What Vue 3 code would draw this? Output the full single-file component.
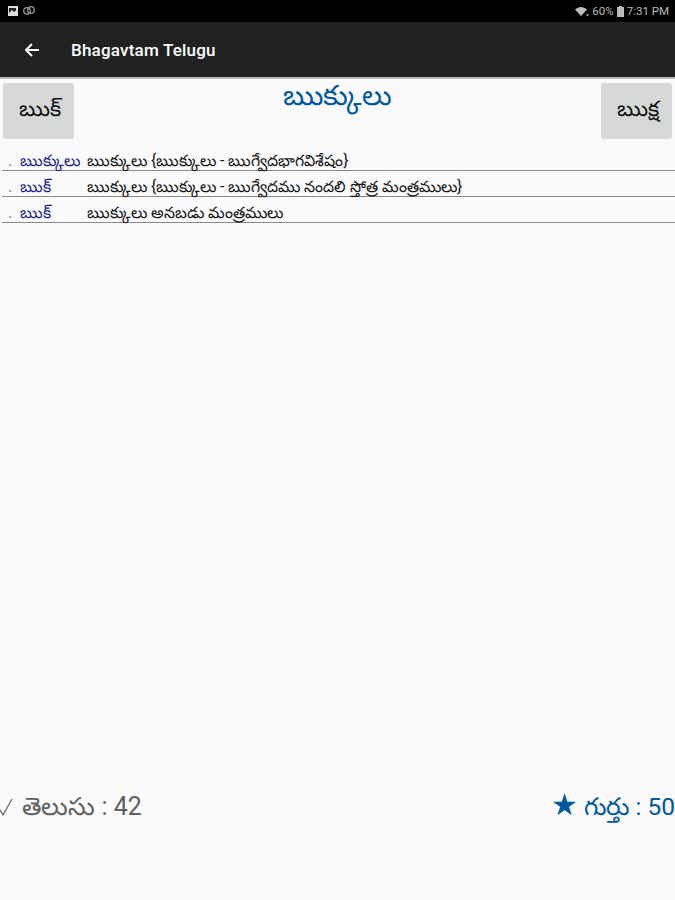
<template>
  <div class="page">
    <div class="statusbar">
      <div class="status-left">
        <svg width="12" height="12" viewBox="0 0 12 12"><path fill="#ddd" d="M1 1h10v10H1z" /><path fill="#222" d="M2 8l3-3 2 2 2-1.500V3H2z" /></svg>
        <svg width="14" height="12" viewBox="0 0 14 12"><g fill="none" stroke="#999" stroke-width="1.300"><circle cx="5" cy="6" r="3.300" /><circle cx="9" cy="5" r="3.300" /></g></svg>
      </div>
      <div class="status-right">
        <svg width="14" height="11" viewBox="0 0 14 11"><path fill="#bbb" d="M0 3.500C3.500 0 8.500 0 12 3.500L6 10z" /><circle cx="12.500" cy="9" r="1" fill="#bbb" /></svg>
        <span>60%</span>
        <svg width="7" height="11" viewBox="0 0 7 11"><path fill="#bbb" d="M2 0h3v1h2v10H0V1h2z" /></svg>
        <span>7:31 PM</span>
      </div>
    </div>

    <header class="toolbar">
      <svg class="back" width="16" height="16" viewBox="0 0 16 16">
        <path fill="none" stroke="#fff" stroke-width="2" d="M15 8H2M8 2L2 8l6 6" />
      </svg>
      <span class="app-title">Bhagavtam Telugu</span>
    </header>

    <main class="content">
      <div class="top-row">
        <button class="nav-btn">ఋక్</button>
        <h1 class="word">ఋక్కులు</h1>
        <button class="nav-btn">ఋక్ష</button>
      </div>

      <ul class="rows">
        <li v-for="(row, idx) in rows" :key="idx" class="row">
          <span class="dot">.</span>
          <span class="term">{{ row.term }}</span>
          <span class="meaning">{{ row.meaning }}</span>
        </li>
      </ul>

      <div class="footer">
        <span class="known">
          <svg class="check" width="13" height="18" viewBox="0 0 13 18">
            <path fill="none" stroke="#6b6b6b" stroke-width="1.300" d="M0 12l3 5L12 1" />
          </svg>
          తెలుసు : 42
        </span>
        <span class="marked"><span class="star">★</span> గుర్తు : 50</span>
      </div>
    </main>
  </div>
</template>

<script setup>
const rows = [
  { term: 'ఋక్కులు', meaning: 'ఋక్కులు {ఋక్కులు - ఋగ్వేదభాగవిశేషం}' },
  { term: 'ఋక్', meaning: 'ఋక్కులు {ఋక్కులు - ఋగ్వేదము నందలి స్తోత్ర మంత్రములు}' },
  { term: 'ఋక్', meaning: 'ఋక్కులు అనబడు మంత్రములు' }
]
</script>

<style>
html,
body {
  margin: 0;
  background: #fafafa;
}
</style>

<style scoped>
.page {
  width: 675px;
  height: 900px;
  display: flex;
  flex-direction: column;
  overflow: hidden;
  font-family: Roboto, "Noto Sans", sans-serif;
  background: #fafafa;
}

.statusbar {
  height: 22px;
  flex: none;
  background: #000;
  display: flex;
  align-items: center;
  justify-content: space-between;
  padding: 0 6px 0 7px;
  color: #bbb;
  font-size: 11.500px;
}

.status-left,
.status-right {
  display: flex;
  align-items: center;
  gap: 3px;
}

.toolbar {
  height: 55px;
  flex: none;
  background: #212121;
  display: flex;
  align-items: center;
  padding-left: 24px;
  border-bottom: 2px solid #bdbdbd;
}

.back {
  margin-right: 31px;
}

.app-title {
  color: #fff;
  font-size: 17px;
  font-weight: 500;
  letter-spacing: 0.2px;
}

.content {
  flex: 1;
  display: flex;
  flex-direction: column;
  padding: 4px 0 0;
}

.top-row {
  display: flex;
  justify-content: space-between;
  padding: 0 3px;
}

.nav-btn {
  width: 71px;
  height: 56px;
  border: none;
  border-radius: 3px;
  padding: 0 5px 0 7px;
  background: #d6d7d7;
  color: #111;
  font-family: inherit;
  font-size: 21.500px;
}

.word {
  margin: 0;
  color: #01579b;
  font-size: 28px;
  font-weight: 400;
  line-height: 26px;
}

.rows {
  list-style: none;
  margin: 6px 0 0;
  padding: 0 0 0 2px;
}

.row {
  height: 25px;
  border-bottom: 1px solid #8a8a8a;
  display: flex;
  align-items: flex-end;
  font-size: 15.700px;
  line-height: 18px;
  color: #111;
}

.dot {
  width: 18px;
  padding-left: 6px;
  box-sizing: border-box;
  color: #777;
}

.term {
  width: 67px;
  color: #1a1a8c;
}

.footer {
  margin-top: auto;
  margin-bottom: 77px;
  display: flex;
  align-items: baseline;
  justify-content: space-between;
  font-size: 25px;
  line-height: 32px;
}

.known {
  color: #616161;
}

.check {
  margin-right: 3px;
  vertical-align: -1px;
}

.marked {
  color: #01579b;
  font-size: 24.500px;
}

.star {
  font-size: 30px;
  line-height: 32px;
}
</style>
